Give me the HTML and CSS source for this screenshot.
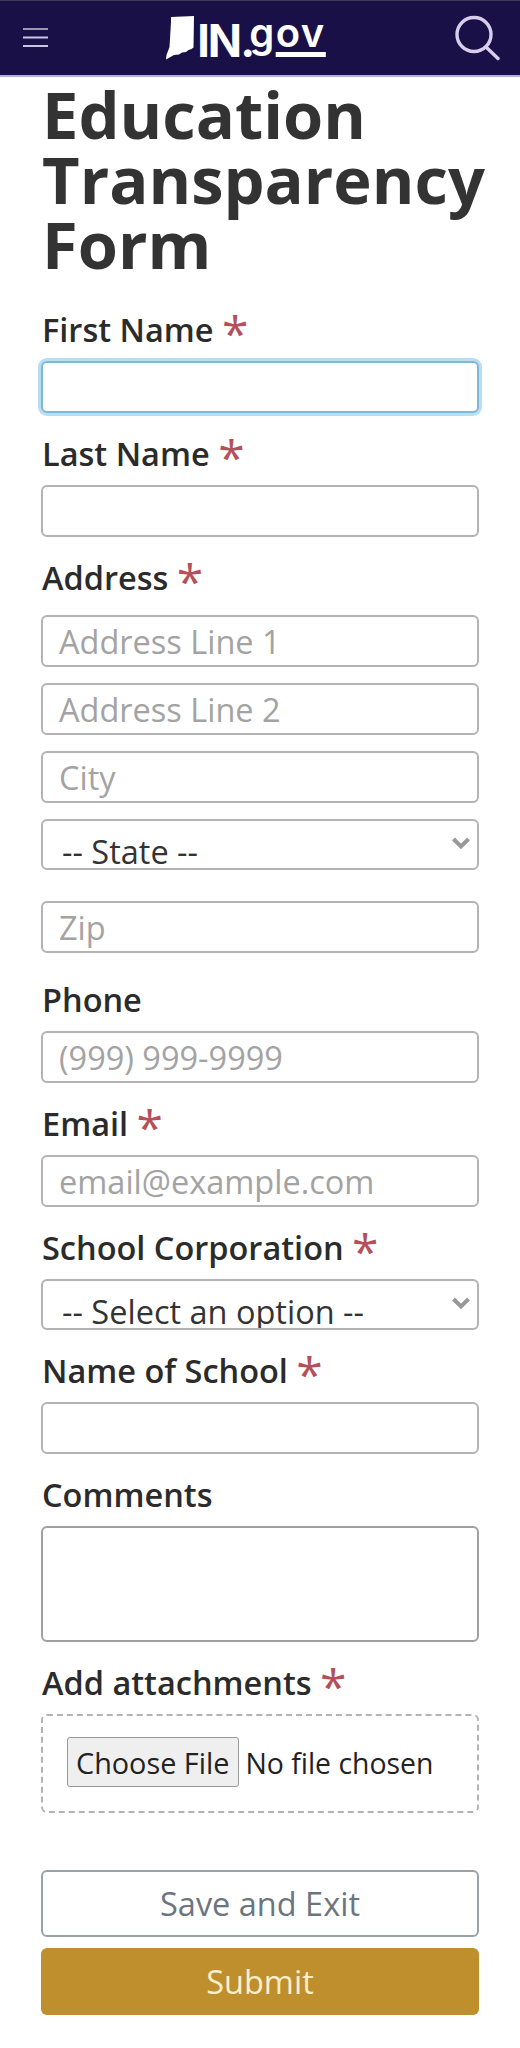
FILE: index.html
```html
<!DOCTYPE html>
<html lang="en">
<head>
<meta charset="UTF-8">
<meta name="viewport" content="width=device-width, initial-scale=1.0">
<title>Education Transparency Form</title>
<link rel="stylesheet" href="styles.css">
</head>
<body>
    <header class="topbar">
        <button class="menu-btn" type="button" aria-label="Menu">
            <svg width="26" height="22" viewBox="0 0 26 22">
                <path d="M0 2H25" stroke="#f2f0fa" stroke-width="1.200" fill="none"/>
                <path d="M0 10.500H25M0 19H25" stroke="#c9c3e4" stroke-width="2" fill="none"/>
            </svg>
        </button>
        <a class="logo" href="#">
            <svg class="logo-state" width="28" height="44" viewBox="0 0 28 44">
                <path d="M5 1L28 0 27.500 31.500 25.500 33 22.500 34 20 36 16 36.500 13 38.500 8 39 4.500 41 0 43.500 0.500 39 2 35 3.500 31 5 6Z" fill="#fff"/>
            </svg>
            <span class="logo-text">IN.<span class="logo-gov">g<span class="logo-ov">ov</span></span></span>
        </a>
        <button class="search-btn" type="button" aria-label="Search">
            <svg width="46" height="46" viewBox="0 0 46 46">
                <circle cx="20" cy="19.500" r="17" stroke="#d5cfeb" stroke-width="3.400" fill="none"/>
                <path d="M32 32L44 43.500" stroke="#d5cfeb" stroke-width="3.400" stroke-linecap="round"/>
            </svg>
        </button>
    </header>

    <main class="page">
        <h1>Education Transparency Form</h1>
        <form>
            <div class="field">
                <label>First Name <span class="req">*</span></label>
                <input type="text" class="focused">
            </div>
            <div class="field">
                <label>Last Name <span class="req">*</span></label>
                <input type="text">
            </div>
            <div class="field address">
                <label>Address <span class="req">*</span></label>
                <input type="text" placeholder="Address Line 1">
                <input type="text" placeholder="Address Line 2">
                <input type="text" placeholder="City">
                <div class="select-wrap state">
                    <select>
                        <option>-- State --</option>
                    </select>
                    <svg class="chevron" width="20" height="14" viewBox="0 0 20 14">
                        <path d="M2.500 3L10 10.500 17.500 3" stroke="#999" stroke-width="4" fill="none"/>
                    </svg>
                </div>
                <input type="text" placeholder="Zip">
            </div>
            <div class="field">
                <label>Phone</label>
                <input type="text" placeholder="(999) 999-9999">
            </div>
            <div class="field">
                <label>Email <span class="req">*</span></label>
                <input type="text" placeholder="email@example.com">
            </div>
            <div class="field">
                <label>School Corporation <span class="req">*</span></label>
                <div class="select-wrap">
                    <select>
                        <option>-- Select an option --</option>
                    </select>
                    <svg class="chevron" width="20" height="14" viewBox="0 0 20 14">
                        <path d="M2.500 3L10 10.500 17.500 3" stroke="#999" stroke-width="4" fill="none"/>
                    </svg>
                </div>
            </div>
            <div class="field">
                <label>Name of School <span class="req">*</span></label>
                <input type="text">
            </div>
            <div class="field">
                <label>Comments</label>
                <textarea></textarea>
            </div>
            <div class="field">
                <label>Add attachments <span class="req">*</span></label>
                <div class="dropzone">
                    <input type="file">
                </div>
            </div>
            <div class="actions">
                <button class="btn btn-save" type="button">Save and Exit</button>
                <button class="btn btn-submit" type="submit">Submit</button>
            </div>
        </form>
    </main>
</body>
</html>
```

FILE: styles.css
```css
* {
    box-sizing: border-box;
}
body {
    margin: 0;
    font-family: "Open Sans", Arial, sans-serif;
    color: #333;
    background: #fff;
}
.topbar {
    height: 77px;
    background: #1a1048;
    border-top: 1px solid #3d3a57;
    border-bottom: 2px solid #b5afd6;
    display: flex;
    align-items: center;
    justify-content: space-between;
    padding: 0 20px 0 23px;
}
.menu-btn, .search-btn {
    background: none;
    border: none;
    padding: 0;
    display: flex;
}
.logo {
    display: flex;
    align-items: center;
    color: #fff;
    text-decoration: none;
    margin-left: -11px;
}
.logo-state {
    margin-right: 3px;
}
.logo-text {
    font-family: Inter, Arial, sans-serif;
    font-size: 45px;
    font-weight: 700;
    line-height: 1;
    letter-spacing: -2px;
}
.logo-gov {
    margin-left: -4px;
    font-size: 40px;
    font-weight: 600;
    letter-spacing: 1.500px;
    vertical-align: 10px;
}
.logo-ov {
    text-decoration: underline;
    text-decoration-thickness: 5px;
    text-underline-offset: 5px;
}
.page {
    padding: 0 41px;
}
h1 {
    margin: 5px 0 28px 1px;
    font-size: 65px;
    line-height: 65px;
    font-weight: 700;
    color: #333;
}
.field {
    margin-bottom: 16px;
}
.field label {
    display: block;
    height: 56px;
    padding-left: 1px;
    font-size: 32.500px;
    line-height: 50px;
    font-weight: 600;
    color: #2b2b2b;
    white-space: nowrap;
}
.req {
    color: #b5505a;
    font-size: 48px;
    font-weight: 400;
    line-height: 40px;
    vertical-align: middle;
}
input[type="text"], textarea, select {
    display: block;
    width: 100%;
    height: 52px;
    border: 2px solid #b3b3b3;
    border-radius: 6px;
    background: #fff;
    font-family: inherit;
    font-size: 32.500px;
    color: #333;
    padding: 0 16px;
}
input::placeholder {
    color: #a3a3a3;
    opacity: 1;
}
input.focused {
    border-color: #7eb9d8;
    box-shadow: 0 0 0 3px #b9def2;
}
.address {
    margin-bottom: 22px;
}
.address label {
    margin-bottom: 6px;
}
.address input[type="text"], .address .select-wrap {
    margin-bottom: 16px;
}
.address input[type="text"]:last-child {
    margin-bottom: 0;
}
.address .state {
    margin-bottom: 31px;
}
.select-wrap {
    position: relative;
}
select {
    appearance: none;
    padding: 11px 19px 0;
    height: 51px;
    line-height: 40px;
}
.chevron {
    position: absolute;
    right: 8px;
    top: 17px;
}
textarea {
    height: 116px;
    resize: none;
    border-color: #a0a0a0;
}
.dropzone {
    height: 99px;
    border: 2px dashed #b3b3b3;
    border-radius: 6px;
    padding: 21px 24px;
}
input[type="file"] {
    font-family: inherit;
    font-size: 28.400px;
    color: #222;
    width: 100%;
}
input[type="file"]::file-selector-button {
    font-family: inherit;
    font-size: 28.800px;
    height: 50px;
    padding: 0 9px 0 8px;
    margin-right: 6px;
    background: #efefef;
    border: 1px solid #999;
    border-radius: 3px;
    color: #222;
}
.actions {
    margin-top: 57px;
    display: flex;
    flex-direction: column;
    gap: 11px;
}
.btn {
    height: 67px;
    border-radius: 6px;
    font-family: inherit;
    font-size: 32.500px;
}
.btn-save {
    background: #fff;
    border: 2px solid #9aa2a8;
    color: #6c757d;
}
.btn-submit {
    background: #bf8f2e;
    border: none;
    color: #fbeecb;
}
```
